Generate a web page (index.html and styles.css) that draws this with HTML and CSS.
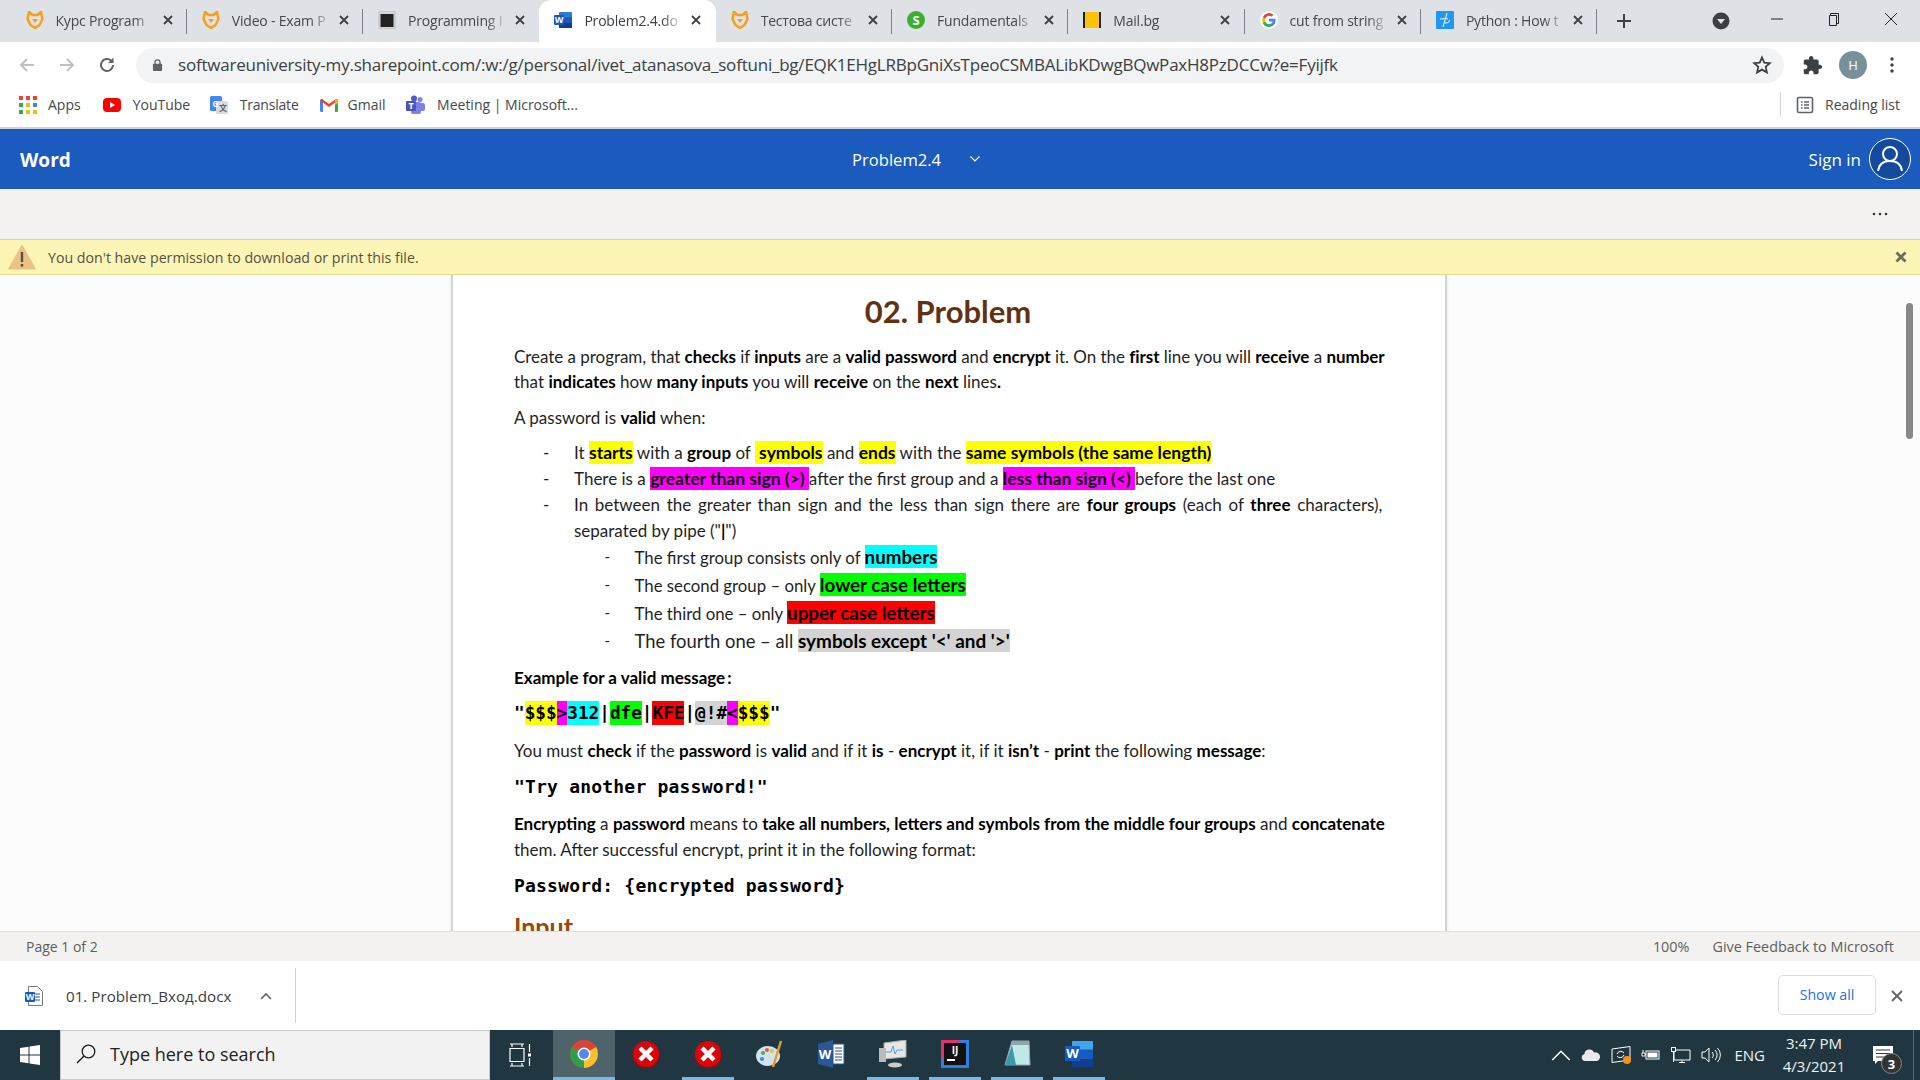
FILE: index.html
```html
<!DOCTYPE html>
<html lang="en">
<head>
<meta charset="utf-8">
<title>Problem2.4</title>
<link rel="stylesheet" href="styles.css">
</head>
<body>
<svg class="defs" width="0" height="0">
  <symbol id="fox" viewBox="0 0 18 18"><path d="M3 1 1.500 8l3 6 4.500 3 4.500-3 3-6L15 1l-3.500 3h-5z" fill="none" stroke="#f7a11a" stroke-width="2.600" stroke-linejoin="round"/><path d="M6 8h6L9 12z" fill="#f7a11a"/></symbol>
  <symbol id="closex" viewBox="0 0 12 12"><path d="M2 2l8 8M10 2l-8 8" stroke="#3c4043" stroke-width="1.800" fill="none"/></symbol>
  <symbol id="wordapp" viewBox="0 0 18 18"><rect x="5" y="1" width="13" height="16" rx="1" fill="#2b7cd3"/><rect x="5" y="6.300" width="13" height="5.400" fill="#185abd"/><rect x="5" y="11.700" width="13" height="5.300" fill="#103f91"/><rect x="0" y="4" width="10" height="10" rx="1" fill="#185abd"/><text x="5" y="12" text-anchor="middle" class="svgw">W</text></symbol>
</svg>

<header class="tabstrip">
  <div class="tabs">
    <div class="tab sep"><svg class="fav"><use href="#fox"/></svg><span class="tabtitle">Курс Program</span><svg class="tabx"><use href="#closex"/></svg></div>
    <div class="tab sep"><svg class="fav"><use href="#fox"/></svg><span class="tabtitle">Video - Exam P</span><svg class="tabx"><use href="#closex"/></svg></div>
    <div class="tab"><svg class="fav" viewBox="0 0 18 18"><rect x="1" y="0" width="16" height="18" rx="1" fill="#d8d8d8" stroke="#aaa" stroke-width=".6"/><rect x="2.500" y="3" width="13" height="13" fill="#222"/></svg><span class="tabtitle">Programming I</span><svg class="tabx"><use href="#closex"/></svg></div>
    <div class="tab active"><svg class="fav"><use href="#wordapp"/></svg><span class="tabtitle">Problem2.4.do</span><svg class="tabx"><use href="#closex"/></svg></div>
    <div class="tab sep"><svg class="fav"><use href="#fox"/></svg><span class="tabtitle">Тестова систе</span><svg class="tabx"><use href="#closex"/></svg></div>
    <div class="tab sep"><svg class="fav" viewBox="0 0 18 18"><circle cx="9" cy="9" r="9" fill="#3dae2b"/><text x="9" y="14" text-anchor="middle" class="svgs">S</text></svg><span class="tabtitle">Fundamentals</span><svg class="tabx"><use href="#closex"/></svg></div>
    <div class="tab sep"><svg class="fav" viewBox="0 0 18 18"><rect x="0" y="1" width="18" height="16" fill="#222"/><rect x="2" y="1" width="14" height="16" fill="#fcc30b"/></svg><span class="tabtitle">Mail.bg</span><svg class="tabx"><use href="#closex"/></svg></div>
    <div class="tab sep"><svg class="fav" viewBox="0 0 18 18"><circle cx="9" cy="9" r="9" fill="#fff"/><path d="M15.500 9.200c0-.500 0-1-.1-1.400H9v2.700h3.700a3.200 3.200 0 0 1-1.400 2.100v1.700h2.200c1.300-1.200 2-3 2-5.100z" fill="#4285f4"/><path d="M9 16c1.900 0 3.400-.6 4.500-1.700l-2.200-1.700c-.6.400-1.400.7-2.300.7-1.800 0-3.300-1.200-3.800-2.800H2.900v1.700A6.800 6.800 0 0 0 9 16z" fill="#34a853"/><path d="M5.200 10.500a4 4 0 0 1 0-2.700V6H2.900a6.800 6.800 0 0 0 0 6.200z" fill="#fbbc05"/><path d="M9 4.700c1 0 1.900.4 2.600 1l1.900-1.900A6.800 6.800 0 0 0 2.900 6l2.300 1.800C5.700 6 7.200 4.700 9 4.700z" fill="#ea4335"/></svg><span class="tabtitle">cut from string</span><svg class="tabx"><use href="#closex"/></svg></div>
    <div class="tab sep"><svg class="fav" viewBox="0 0 18 18"><rect x="0" y="0" width="18" height="18" rx="1" fill="#2196f3"/><path d="M11 2 7 16M4 8c3 0 6-1 8 0M9 12c3 0 5-1 4-3" stroke="#fff" stroke-width="1" fill="none"/></svg><span class="tabtitle">Python : How t</span><svg class="tabx"><use href="#closex"/></svg></div>
    <svg class="newtab" viewBox="0 0 16 16"><path d="M8 1v14M1 8h14" stroke="#3c4043" stroke-width="2"/></svg>
  </div>
  <svg class="profiledrop" viewBox="0 0 18 18"><circle cx="9" cy="9" r="8.500" fill="#3c4043"/><path d="M5 7h8l-4 5z" fill="#dee1e6"/></svg>
  <div class="winbtns">
    <svg class="winbtn" viewBox="0 0 14 14"><path d="M1 7h12" stroke="#222" stroke-width="1"/></svg>
    <svg class="winbtn" viewBox="0 0 14 14"><path d="M3.500 3.500V1.500h8v10h-2M2.500 3.500h7v10h-7z" stroke="#222" stroke-width="1" fill="none"/></svg>
    <svg class="winbtn" viewBox="0 0 14 14"><path d="M1 1l12 12M13 1 1 13" stroke="#222" stroke-width="1"/></svg>
  </div>
</header>

<div class="toolbar">
  <svg class="navicon" viewBox="0 0 18 18"><path d="M16 9H3M9 3 3 9l6 6" stroke="#bdc1c6" stroke-width="2" fill="none"/></svg>
  <svg class="navicon" viewBox="0 0 18 18"><path d="M2 9h13M9 3l6 6-6 6" stroke="#bdc1c6" stroke-width="2" fill="none"/></svg>
  <svg class="navicon" viewBox="0 0 18 18"><path d="M15 9a6 6 0 1 1-1.800-4.300" stroke="#5f6368" stroke-width="2" fill="none"/><path d="M15.500 1.500v5.500H10z" fill="#5f6368"/></svg>
  <div class="omnibox">
    <svg class="lock" viewBox="0 0 12 14"><rect x="1" y="5.500" width="10" height="8" rx="1" fill="#5f6368"/><path d="M3.300 6V4a2.700 2.700 0 0 1 5.400 0v2" fill="none" stroke="#5f6368" stroke-width="1.400"/></svg>
    <span class="url">softwareuniversity-my.sharepoint.com/:w:/g/personal/ivet_atanasova_softuni_bg/EQK1EHgLRBpGniXsTpeoCSMBALibKDwgBQwPaxH8PzDCCw?e=Fyijfk</span>
    <svg class="star" viewBox="0 0 20 20"><path d="M10 2.500l2.300 5.100 5.500.6-4.100 3.700 1.200 5.500L10 14.600l-4.900 2.800 1.200-5.500L2.200 8.200l5.500-.6z" fill="none" stroke="#3c4043" stroke-width="1.800"/></svg>
  </div>
  <svg class="puzzle" viewBox="0 0 24 24"><path d="M20.500 11H19V7c0-1.100-.9-2-2-2h-4V3.500C13 2.120 11.880 1 10.500 1S8 2.120 8 3.500V5H4c-1.100 0-1.990.9-1.990 2v3.800H3.500c1.490 0 2.700 1.210 2.700 2.700s-1.210 2.700-2.700 2.700H2V20c0 1.100.9 2 2 2h3.800v-1.500c0-1.490 1.210-2.700 2.700-2.700 1.490 0 2.700 1.210 2.700 2.700V22H17c1.100 0 2-.9 2-2v-4h1.500c1.380 0 2.500-1.120 2.500-2.500S21.880 11 20.500 11z" fill="#3c4043"/></svg>
  <div class="avatar">H</div>
  <svg class="kebab" viewBox="0 0 4 18"><circle cx="2" cy="3" r="1.700"/><circle cx="2" cy="9" r="1.700"/><circle cx="2" cy="15" r="1.700"/></svg>
</div>

<nav class="bookmarks">
  <svg class="bmicon" viewBox="0 0 18 18"><g><rect x="0" y="0" width="4" height="4" fill="#ea4335"/><rect x="7" y="0" width="4" height="4" fill="#ea4335"/><rect x="14" y="0" width="4" height="4" fill="#ea4335"/><rect x="0" y="7" width="4" height="4" fill="#34a853"/><rect x="7" y="7" width="4" height="4" fill="#fbbc05"/><rect x="14" y="7" width="4" height="4" fill="#4285f4"/><rect x="0" y="14" width="4" height="4" fill="#34a853"/><rect x="7" y="14" width="4" height="4" fill="#fbbc05"/><rect x="14" y="14" width="4" height="4" fill="#fbbc05"/></g></svg>
  <span class="bm apps">Apps</span>
  <svg class="bmicon" viewBox="0 0 18 18"><rect x="0" y="2" width="18" height="14" rx="4" fill="#f00"/><path d="M7 6l5 3-5 3z" fill="#fff"/></svg>
  <span class="bm yt">YouTube</span>
  <svg class="bmicon" viewBox="0 0 18 18"><rect x="0" y="0" width="12" height="15" rx="1.500" fill="#4285f4"/><rect x="6" y="5" width="12" height="13" rx="1.500" fill="#dadce0"/><text x="5.500" y="10.500" text-anchor="middle" class="svgg">G</text><text x="13" y="15" text-anchor="middle" class="svgt">文</text></svg>
  <span class="bm tr">Translate</span>
  <svg class="bmicon" viewBox="0 0 18 18"><path d="M0 4.500A1.500 1.500 0 0 1 1.500 3H3v13H1.200A1.200 1.200 0 0 1 0 14.800z" fill="#4285f4"/><path d="M15 3h1.500A1.500 1.500 0 0 1 18 4.500v10.300a1.200 1.200 0 0 1-1.200 1.200H15z" fill="#34a853"/><path d="M0 4.500 9 11l9-6.500L16 3 9 8 2 3z" fill="#ea4335"/><path d="M15 3l3 1.500V7l-3 2z" fill="#fbbc05"/></svg>
  <span class="bm gm">Gmail</span>
  <svg class="bmicon teams" viewBox="0 0 20 20"><circle cx="14" cy="4.500" r="2.500" fill="#7b83eb"/><circle cx="8" cy="3.500" r="3" fill="#5059c9"/><rect x="11" y="8" width="8" height="8" rx="2" fill="#7b83eb"/><rect x="5" y="7" width="10" height="12" rx="2" fill="#7b83eb"/><rect x="0" y="6" width="10" height="10" rx="1" fill="#4b53bc"/><text x="5" y="14" text-anchor="middle" class="svgw">T</text></svg>
  <span class="bm">Meeting | Microsoft...</span>
  <div class="reading">
    <svg class="rlicon" viewBox="0 0 18 18"><rect x="1.500" y="1.500" width="15" height="15" rx="1.500" fill="none" stroke="#5f6368" stroke-width="1.600"/><path d="M5 6h1.500M8 6h5M5 9h1.500M8 9h5M5 12h1.500M8 12h5" stroke="#5f6368" stroke-width="1.400"/></svg>
    <span class="bm">Reading list</span>
  </div>
</nav>

<div class="wordbar">
  <span class="wordbrand">Word</span>
  <div class="doctitle"><span>Problem2.4</span><svg class="titlechev" viewBox="0 0 12 8"><path d="M1.500 1.500 6 6l4.500-4.500" stroke="#fff" stroke-width="1.200" fill="none"/></svg></div>
  <div class="signin"><span>Sign in</span>
    <svg class="person" viewBox="0 0 42 42"><circle cx="21" cy="21" r="20.500" fill="#134a9c" stroke="#fff" stroke-width="1"/><circle cx="21" cy="16" r="7" fill="none" stroke="#fff" stroke-width="2"/><path d="M9 33c1-7 6-10 12-10s11 3 12 10" fill="none" stroke="#fff" stroke-width="2"/></svg>
  </div>
</div>

<div class="ribbon"><svg class="dots" viewBox="0 0 16 4"><circle cx="2" cy="2" r="1.300"/><circle cx="8" cy="2" r="1.300"/><circle cx="14" cy="2" r="1.300"/></svg></div>

<div class="notice">
  <svg class="warn" viewBox="0 0 28 26"><path d="M14 1 27.500 25H.5z" fill="#ecc285" stroke="#ecc285" stroke-linejoin="round"/><rect x="12.800" y="8" width="2.400" height="10" fill="#5a5242"/><rect x="12.800" y="20" width="2.400" height="2.600" fill="#5a5242"/></svg>
  <span class="noticetext">You don't have permission to download or print this file.</span>
  <svg class="noticex" viewBox="0 0 12 12"><path d="M1.500 1.500l9 9M10.500 1.500l-9 9" stroke="#6b6b60" stroke-width="2.800"/></svg>
</div>

<main class="viewer">
  <article class="page">
    <h1 class="title">02. Problem</h1>
    <p class="line w1 lp1">Create a program, that <b>checks</b> if <b>inputs</b> are a <b>valid password</b> and <b>encrypt</b> it. On the <b>first</b> line you will <b>receive</b> a <b>number</b></p>
    <p class="line w2">that <b>indicates</b> how <b>many inputs</b> you will <b>receive</b> on the <b>next</b> lines<b>.</b></p>
    <p class="line w3 lp2">A password is <b>valid</b> when:</p>
    <ul class="bullets">
      <li class="bl"><span class="dash">-</span><span class="btext">It <mark class="y">starts</mark> with a <b>group</b> of <mark class="y">&nbsp;symbols</mark> and <mark class="y">ends</mark> with the <mark class="y">same symbols (the same length)</mark></span></li>
      <li class="bl"><span class="dash">-</span><span class="btext">There is a <mark class="m">greater than sign (&gt;)&nbsp;</mark>after the first group and a <mark class="m">less than sign (&lt;)&nbsp;</mark>before the last one</span></li>
      <li class="bl"><span class="dash">-</span><span class="btext just">In between the greater than sign and the less than sign there are <b>four groups</b> (each of <b>three</b> characters),</span></li>
      <li class="bl"><span class="dash"></span><span class="btext">separated by pipe ("<b>|</b>")</span></li>
    </ul>
    <ul class="subs">
      <li class="sl"><span class="dash">-</span><span class="stext">The first group consists only of <mark class="c big">numbers</mark></span></li>
      <li class="sl"><span class="dash">-</span><span class="stext">The second group – only <mark class="g big">lower case letters</mark></span></li>
      <li class="sl"><span class="dash">-</span><span class="stext">The third one – only <mark class="r big">upper case letters</mark></span></li>
      <li class="sl"><span class="dash">-</span><span class="stext four">The fourth one – all <mark class="k">symbols except '&lt;' and '&gt;'</mark></span></li>
    </ul>
    <p class="line example"><b>Example for a valid message&#8201;:</b></p>
    <p class="code sample">"<mark class="y">$$$</mark><mark class="m">&gt;</mark><mark class="c">312</mark>|<mark class="g">dfe</mark>|<mark class="r">KFE</mark>|<mark class="k">@!#</mark><mark class="m">&lt;</mark><mark class="y">$$$</mark>"</p>
    <p class="line must">You must <b>check</b> if the <b>password</b> is <b>valid</b> and if it <b>is</b> - <b>encrypt</b> it, if it <b>isn’t</b> - <b>print</b> the following <b>message</b>:</p>
    <p class="code try">"Try another password!"</p>
    <p class="line enc"><b>Encrypting</b> a <b>password</b> means to <b>take all numbers, letters and symbols from the middle four groups</b> and <b>concatenate</b></p>
    <p class="line them">them. After successful encrypt, print it in the following format:</p>
    <p class="code pass">Password: {encrypted password}</p>
    <h2 class="input">Input</h2>
  </article>
  <div class="scrollthumb"></div>
</main>

<div class="statusbar">
  <span>Page 1 of 2</span>
  <span class="zoom">100%</span>
  <span class="feedback">Give Feedback to Microsoft</span>
</div>

<div class="downloads">
  <div class="dlitem">
    <svg class="docicon" viewBox="0 0 18 20"><path d="M3.500 .5h9l5 5v14h-14z" fill="#fff" stroke="#7a7a7a"/><path d="M10 8h5M10 11h5M10 14h5" stroke="#185abd" stroke-width="1.200"/><rect x="0" y="6" width="10" height="10" rx="1" fill="#185abd"/><text x="5" y="14" text-anchor="middle" class="svgw">W</text></svg>
    <span class="dlname">01. Problem_Вход.docx</span>
    <svg class="dlchev" viewBox="0 0 12 8"><path d="M1 7l5-5 5 5" stroke="#5f6368" stroke-width="1.600" fill="none"/></svg>
  </div>
  <button class="showall">Show all</button>
  <svg class="dlclose" viewBox="0 0 12 12"><path d="M1 1l10 10M11 1 1 11" stroke="#5f6368" stroke-width="1.800"/></svg>
</div>

<footer class="taskbar">
  <div class="startbtn"><svg class="winlogo" viewBox="0 0 20 20"><path d="M0 3l8.500-1.300V9.500H0zM9.500 1.500 20 0v9.500H9.500zM0 10.500h8.500v7.800L0 17zM9.500 10.500H20V20L9.500 18.500z" fill="#fff"/></svg></div>
  <div class="search"><svg class="mag" viewBox="0 0 20 20"><circle cx="12.500" cy="7.500" r="6.300" fill="none" stroke="#1a1a1a" stroke-width="1.300"/><path d="M8 12 1 19" stroke="#1a1a1a" stroke-width="1.500"/></svg><span>Type here to search</span></div>
  <div class="taskview"><svg viewBox="0 0 22 24" width="22" height="24"><path d="M1 1h14M1 23h14M3 1v3M13 1v3M3 20v3M13 20v3M1 5.500h14v13H1zM20.500 1v8M20.500 15v8" stroke="#fff" stroke-width="1.200" fill="none"/><rect x="19" y="10.500" width="3" height="3" fill="#fff"/></svg></div>
  <div class="apps-row">
    <div class="task on act"><svg viewBox="0 0 28 28" class="tico"><circle cx="14" cy="14" r="14" fill="#db4437"/><path d="M14 14 26.100 7A14 14 0 0 1 14 28z" fill="#fbc02d"/><path d="M14 14 14 28A14 14 0 0 1 1.900 7z" fill="#2e9e48"/><circle cx="14" cy="14" r="6.500" fill="#fff"/><circle cx="14" cy="14" r="5" fill="#4d8bf0"/></svg></div>
    <div class="task"><svg viewBox="0 0 28 28" class="tico"><circle cx="14" cy="15" r="13.500" fill="#a00"/><circle cx="14" cy="14" r="13" fill="#d8060c"/><path d="M8 8l12 12M20 8 8 20" stroke="#fff" stroke-width="4.500"/></svg></div>
    <div class="task on"><svg viewBox="0 0 28 28" class="tico"><circle cx="14" cy="15" r="13.500" fill="#a00"/><circle cx="14" cy="14" r="13" fill="#d8060c"/><path d="M8 8l12 12M20 8 8 20" stroke="#fff" stroke-width="4.500"/></svg></div>
    <div class="task"><svg viewBox="0 0 28 28" class="tico"><ellipse cx="12" cy="16" rx="12" ry="10" fill="#cfe4ee"/><circle cx="7" cy="13" r="2" fill="#5aa845"/><circle cx="11" cy="10" r="2" fill="#e05a3a"/><circle cx="16" cy="11" r="2" fill="#e2c23a"/><circle cx="6" cy="19" r="2" fill="#4a86d0"/><path d="M25 1 17 27" stroke="#e39a2a" stroke-width="2.500"/></svg></div>
    <div class="task"><svg viewBox="0 0 28 28" class="tico"><path d="M0 4 15 0v28L0 24z" fill="#2b579a"/><rect x="15" y="4" width="11" height="20" fill="#fff" stroke="#2b579a"/><path d="M17 8h7M17 11h7M17 14h7M17 17h7M17 20h7" stroke="#2b579a"/><text x="7" y="19" text-anchor="middle" class="svgw2">W</text></svg></div>
    <div class="task on"><svg viewBox="0 0 28 28" class="tico"><path d="M5 3 27 0v17L5 19z" fill="#e6e6e6" stroke="#aaa"/><path d="M7 12h5l2-6 2 8 2-4h6" stroke="#5aa0d0" fill="none"/><rect x="0" y="8" width="7" height="14" fill="#bbb"/><ellipse cx="16" cy="25" rx="7" ry="2.500" fill="#ccc"/></svg></div>
    <div class="task on"><svg viewBox="0 0 28 28" class="tico"><rect width="28" height="28" fill="#2f7fe0"/><path d="M0 0h20L0 20z" fill="#e6306f"/><rect x="3" y="3" width="22" height="22" fill="#111"/><text x="14" y="14" text-anchor="middle" class="svgij">IJ</text><rect x="6" y="19" width="8" height="2" fill="#fff"/></svg></div>
    <div class="task on"><svg viewBox="0 0 28 28" class="tico"><path d="M9 1h17l1 24H2z" fill="#bfe8e8" stroke="#8ab"/><path d="M9 1h17v4H8z" fill="#8fa5a8"/><path d="M2 25 9 5l4 20z" fill="#3d9aa8"/></svg></div>
    <div class="task on"><svg viewBox="0 0 28 28" class="tico"><rect x="7" y="1" width="21" height="26" rx="1" fill="#41a5ee"/><rect x="7" y="9.500" width="21" height="9" fill="#185abd"/><rect x="7" y="18.500" width="21" height="8.500" fill="#103f91"/><rect x="0" y="6" width="15" height="15" rx="1" fill="#185abd"/><text x="7.500" y="18" text-anchor="middle" class="svgw2">W</text></svg></div>
  </div>
  <div class="tray">
    <svg class="ti" viewBox="0 0 16 10"><path d="M1 9l7-7 7 7" stroke="#fff" stroke-width="1.200" fill="none"/></svg>
    <svg class="ti" viewBox="0 0 20 12"><path d="M4 12a3.500 3.500 0 0 1-.6-6.900A5 5 0 0 1 13 3.500 4.300 4.300 0 0 1 16 12z" fill="#e9e9e9"/></svg>
    <svg class="ti sync" viewBox="0 0 20 18"><path d="M1 3 19 .5V14L1 16.500z" fill="none" stroke="#fff"/><path d="M6 8a4 4 0 0 1 7-1M13 9a4 4 0 0 1-7 1" stroke="#fff" fill="none"/><circle cx="16" cy="14" r="4" fill="#f7900a"/></svg>
    <svg class="ti" viewBox="0 0 20 12"><rect x="5" y="2" width="13" height="8" fill="none" stroke="#fff"/><rect x="6.500" y="3.500" width="10" height="5" fill="#fff"/><path d="M1 4h3v3H1zM2 1v3M4 5.500h1" stroke="#fff"/></svg>
    <svg class="ti" viewBox="0 0 20 16"><path d="M3 3h16v10H3zM11 13v2M8 15.500h6" stroke="#fff" fill="none"/><rect x=".5" y=".5" width="4" height="4" fill="#203640" stroke="#fff"/><path d="M2.500 4.500V15" stroke="#fff"/></svg>
    <svg class="ti" viewBox="0 0 20 16"><path d="M1 5h3l4-4v14l-4-4H1z" fill="none" stroke="#fff"/><path d="M11 5a4 4 0 0 1 0 6M14 3a7 7 0 0 1 0 10M16.500 1a10 10 0 0 1 0 14" fill="none" stroke="#fff"/></svg>
    <span class="lang">ENG</span>
    <div class="clock"><span>3:47 PM</span><span>4/3/2021</span></div>
    <div class="notif"><svg viewBox="0 0 20 18" width="20" height="18"><path d="M0 0h20v15H5l-3 3v-3H0z" fill="#fff"/><path d="M3 4h14M3 7.500h14M3 11h10" stroke="#203640"/></svg><span class="badge">3</span></div>
    <div class="peek"></div>
  </div>
</footer>
</body>
</html>
```
FILE: styles.css
```css
* { box-sizing: border-box; }
html, body { margin: 0; padding: 0; width: 1920px; height: 1080px; overflow: hidden; }
body { display: flex; flex-direction: column; background: #fff; font-family: "Open Sans", "Liberation Sans", sans-serif; color: #3c4043; }
.defs { position: absolute; }
.svgw { font: 700 9px "Open Sans", sans-serif; fill: #fff; }
.svgw2 { font: 700 13px "Open Sans", sans-serif; fill: #fff; }
.svgs { font: 700 13px "Open Sans", sans-serif; fill: #fff; }
.svgg { font: 700 8px "Open Sans", sans-serif; fill: #fff; }
.svgt { font: 700 8px "Noto Sans CJK SC", sans-serif; fill: #5f6368; }
.svgij { font: 700 10px "Open Sans", sans-serif; fill: #fff; }

/* tab strip */
.tabstrip { height: 42px; flex: none; background: #dee1e6; display: flex; align-items: stretch; }
.tabs { display: flex; align-items: stretch; padding-left: 10.500px; width: 1700px; }
.tab { width: 176.3px; flex: none; display: flex; align-items: center; padding: 0 0 2px 15px; position: relative; font-size: 14px; color: #45484c; }
.tab.sep::after { content: ""; position: absolute; right: 0; top: 9px; height: 25px; width: 1px; background: #7d8187; }
.tab.active { background: #fff; border-radius: 12px 12px 0 0; color: #3c4043; }
.fav { width: 18px; height: 18px; flex: none; }
.tabtitle { width: 100px; margin-left: 12px; white-space: nowrap; overflow: hidden; -webkit-mask-image: linear-gradient(90deg, #000 78%, transparent); mask-image: linear-gradient(90deg, #000 78%, transparent); letter-spacing: -.2px; }
.tabx { width: 12px; height: 12px; margin-left: 6px; flex: none; }
.newtab { width: 16px; height: 16px; align-self: center; margin-left: 19px; }
.profiledrop { width: 18px; height: 18px; align-self: center; margin-left: 12px; }
.winbtns { display: flex; margin-left: 40px; gap: 43px; padding-top: 12px; }
.winbtn { width: 14px; height: 14px; }

/* toolbar */
.toolbar { height: 46px; flex: none; background: #fff; display: flex; align-items: center; padding: 0 0 0 18px; }
.navicon { width: 18px; height: 18px; flex: none; margin-right: 22px; }
.omnibox { width: 1648px; height: 35px; margin-left: -2px; background: #f1f3f4; border-radius: 18px; display: flex; align-items: center; padding: 0 0 1px 16px; }
.lock { width: 11px; height: 14px; flex: none; }
.url { margin-left: 15px; width: 1569px; font-size: 17px; white-space: nowrap; color: #3c4043; letter-spacing: -.22px; }
.star { width: 20px; height: 20px; flex: none; margin-left: 5px; }
.puzzle { width: 21px; height: 21px; margin-left: 18px; flex: none; }
.avatar { width: 28px; height: 28px; border-radius: 50%; margin-left: 16px; background: #78909c; color: #fff; font-size: 13px; display: flex; align-items: center; justify-content: center; flex: none; }
.kebab { width: 4px; height: 18px; margin-left: 23px; fill: #3c4043; flex: none; }

/* bookmarks */
.bookmarks { height: 39px; flex: none; background: #fff; display: flex; align-items: center; padding: 0 0 6px 19px; font-size: 14px; }
.bmicon { width: 18px; height: 18px; flex: none; }
.teams { width: 20px; height: 20px; }
.bm { margin-left: 11px; white-space: nowrap; color: #45484c; }
.bm.apps { margin-right: 22px; }
.bm.yt { margin-right: 19.500px; margin-left: 12px; }
.bm.tr { margin-right: 21px; margin-left: 12px; letter-spacing: -.2px; }
.bm.gm { margin-right: 20.500px; margin-left: 10px; }
.reading { margin-left: auto; display: flex; align-items: center; height: 25px; border-left: 1px solid #d5d7da; padding-left: 15px; width: 140px; }
.rlicon { width: 18px; height: 18px; flex: none; }

/* word bar */
.wordbar { height: 62px; flex: none; background: #1a5bbd; border-top: 2px solid #cfd4dc; display: flex; align-items: center; position: relative; color: #fff; padding-left: 20px; }
.wordbrand { font-size: 19px; font-weight: 700; margin-top: 2px; }
.doctitle { position: absolute; left: 852px; top: 0; bottom: 0; display: flex; align-items: center; font-size: 16.600px; }
.titlechev { width: 12px; height: 8px; margin-left: 28px; }
.signin { margin-left: auto; display: flex; align-items: center; gap: 7px; font-size: 17px; padding-right: 9px; }
.signin span { margin-right: 1px; }
.person { width: 42px; height: 42px; }

.ribbon { height: 50px; flex: none; background: #f3f2f1; display: flex; align-items: center; justify-content: flex-end; padding-right: 32px; }
.dots { width: 16px; height: 4px; fill: #333; }

.notice { height: 36px; flex: none; background: #fcf5b6; border-top: 1px solid #dcd98a; border-bottom: 1px solid #dcd98a; display: flex; align-items: center; padding-left: 8px; padding-right: 13px; }
.warn { width: 28px; height: 26px; flex: none; }
.noticetext { margin-left: 12px; font-size: 14.200px; color: #55513f; }
.noticex { width: 12px; height: 12px; margin-left: auto; }

/* document */
.viewer { height: 656px; flex: none; overflow: hidden; position: relative; background: #fcfcfc; display: flex; justify-content: flex-start; padding-left: 451px; }
.page { width: 996px; height: 800px; flex: none; background: #fff; border-left: 2px solid #d4d4d4; border-right: 2px solid #d4d4d4; box-shadow: 0 0 3px rgba(0,0,0,.1); padding: 0 61px; font-family: Lato, "Liberation Sans", sans-serif; font-size: 17px; color: #1f1f1f; }
.page b { font-weight: 700; color: #000; }
.title { margin: 17px 0 0; height: 38px; line-height: 38px; padding-right: 2px; text-align: center; font-size: 31px; font-weight: 700; color: #633010; }
.line { margin: 0; line-height: 25px; white-space: nowrap; }
.w1 { letter-spacing: -.04px; }
.lp1 { margin-top: 14px; }
.lp2 { margin-top: 11px; }
.bullets, .subs { list-style: none; margin: 0; padding: 0; }
.bullets { margin-top: 9px; padding-left: 29px; }
.bl { height: 26px; display: flex; align-items: center; white-space: nowrap; }
.bl mark { font-size: 17.500px; }
.dash { width: 31px; flex: none; }
.btext { display: block; }
.just { word-spacing: 2.350px; }
.subs { padding-left: 90.500px; margin-top: -1px; font-size: 16.800px; }
.sl { height: 28px; display: flex; align-items: center; white-space: nowrap; }
.subs .dash { width: 30px; font-size: 15px; }
.four { font-size: 18.400px; }
.four mark { font-size: 18.900px; }
mark { display: inline-block; line-height: 23px; font-weight: 700; color: #000; }
mark.y { background: #ff0; }
mark.m { background: #f0f; }
mark.c { background: #0ff; }
mark.g { background: #0f0; }
mark.r { background: #f00; }
mark.k { background: #d3d3d3; }
.big { font-size: 18.800px; }
.example { margin-top: 11px; }
.code { margin: 0; font-family: "DejaVu Sans Mono", "Liberation Mono", monospace; font-weight: 700; color: #000; white-space: nowrap; }
.code mark { line-height: 24px; }
.sample { margin-top: 10px; font-size: 17.700px; line-height: 26px; }
.must { margin-top: 12px; }
.try { margin-top: 11px; font-size: 18px; line-height: 25px; letter-spacing: .2px; }
.enc { margin-top: 12px; }
.them { margin-top: 1px; }
.pass { margin-top: 11px; font-size: 18px; line-height: 25px; letter-spacing: .2px; }
.input { margin: 13px 0 0; font-size: 25px; font-weight: 700; color: #974806; line-height: 30px; }
.scrollthumb { position: absolute; left: 1906px; top: 28px; width: 7px; height: 136px; background: #888; border-radius: 3.500px; }

/* status */
.statusbar { height: 30px; flex: none; background: #f3f2f1; border-top: 1px solid #e0dfdd; display: flex; align-items: center; padding: 0 26px; font-size: 14px; color: #605e5c; }
.zoom { margin-left: auto; margin-right: 23px; font-size: 14.400px; }
.feedback { font-size: 14.400px; }

/* downloads */
.downloads { height: 69px; flex: none; background: #fff; display: flex; align-items: center; padding-right: 17px; }
.dlitem { width: 296px; height: 55px; border-right: 1px solid #cfd1d4; display: flex; align-items: center; padding-left: 25px; }
.docicon { width: 18px; height: 20px; flex: none; }
.dlname { margin-left: 23px; font-size: 15.200px; color: #3c4043; white-space: nowrap; }
.dlchev { width: 12px; height: 8px; margin-left: 29px; }
.showall { margin: 0 0 2px auto; width: 98px; height: 40px; background: #fff; border: 1px solid #dadce0; border-radius: 5px; color: #1a73e8; font: 14.200px "Open Sans", sans-serif; }
.dlclose { width: 12px; height: 12px; margin-left: 15px; }

/* taskbar */
.taskbar { height: 50px; flex: none; background: #203640; display: flex; align-items: stretch; color: #fff; }
.startbtn { width: 60px; display: flex; align-items: center; padding-left: 20px; }
.winlogo { width: 20px; height: 20px; }
.search { width: 430px; background: #f2f2f2; border: 1px solid #c8c8c8; display: flex; align-items: center; padding: 0 0 2px 15px; font-size: 18px; color: #222; }
.mag { width: 20px; height: 20px; }
.search span { margin-left: 14px; }
.taskview { width: 63px; display: flex; align-items: center; padding-left: 19px; }
.apps-row { display: flex; }
.task { width: 61.900px; display: flex; align-items: center; justify-content: center; position: relative; padding-bottom: 2px; }
.task.act { background: #4f636b; }
.task.on::after { content: ""; position: absolute; left: 5px; right: 5px; bottom: 0; height: 3px; background: #76b9ed; }
.task.act::after { left: 0; right: 0; }
.tico { width: 28px; height: 28px; }
.tray { margin-left: auto; display: flex; align-items: center; }
.ti { width: 20px; height: 18px; margin-right: 10px; }
.lang { font-size: 15px; margin-left: 3px; color: #f2f2f2; }
.clock { width: 98px; display: flex; flex-direction: column; align-items: center; font-size: 15px; line-height: 23px; color: #f2f2f2; }
.notif { width: 50px; height: 40px; position: relative; display: flex; align-items: center; padding-left: 10px; }
.badge { position: absolute; left: 18px; top: 18px; width: 21px; height: 21px; border-radius: 50%; background: #333; border: 1px solid #888; font-size: 13px; font-weight: 700; display: flex; align-items: center; justify-content: center; }
.peek { width: 7px; height: 50px; border-left: 1px solid #5b6a72; }
```
